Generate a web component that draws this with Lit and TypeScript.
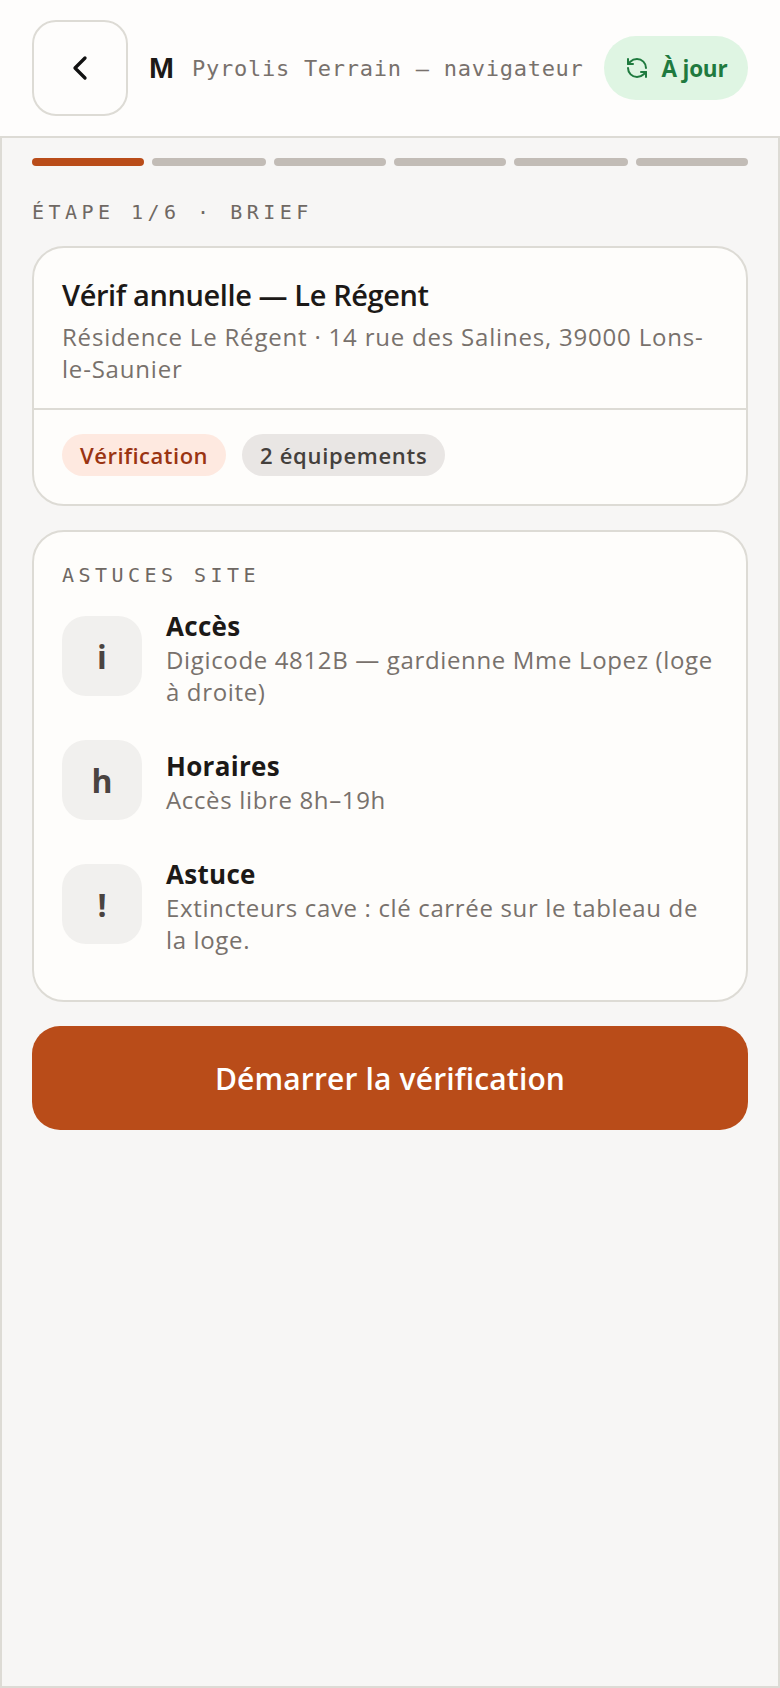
import { LitElement, html, css } from "lit";
import { customElement } from "lit/decorators.js";

const SANS = css`"Open Sans", "Noto Sans", sans-serif`;
const MONO = css`"DejaVu Sans Mono", "Liberation Mono", monospace`;

const TIPS = [
  { glyph: "i", title: "Accès", text: "Digicode 4812B — gardienne Mme Lopez (loge à droite)" },
  { glyph: "h", title: "Horaires", text: "Accès libre 8h–19h" },
  { glyph: "!", title: "Astuce", text: "Extincteurs cave : clé carrée sur le tableau de la loge." },
];

@customElement("app-root")
export class AppRoot extends LitElement {
  static styles = css`
    :host {
      display: flex;
      flex-direction: column;
      min-height: 100vh;
      background: #fefdfc;
      color: #1c1917;
      font-family: ${SANS};
    }
    .top {
      display: flex;
      align-items: center;
      gap: 20px;
      height: 136px;
      padding: 0 32px;
      box-sizing: border-box;
    }
    .back {
      flex: none;
      width: 96px;
      height: 96px;
      box-sizing: border-box;
      border: 2px solid #dddbd5;
      border-radius: 24px;
      background: #fefdfc;
      display: flex;
      align-items: center;
      justify-content: center;
      padding: 0;
    }
    .mark {
      margin-left: 1px;
      font-family: "Liberation Sans", sans-serif;
      font-size: 30px;
      font-weight: 700;
      line-height: 40px;
    }
    .app-name {
      margin-left: -2px;
      font-family: ${MONO};
      font-size: 22px;
      letter-spacing: 0.74px;
      color: #78716c;
      white-space: nowrap;
    }
    .sync {
      margin-left: auto;
      height: 64px;
      width: 144px;
      box-sizing: border-box;
      border-radius: 32px;
      background: #dff5e3;
      color: #1f7a3f;
      display: flex;
      align-items: center;
      justify-content: center;
      gap: 13px;
      font-size: 22.5px;
      font-weight: 700;
      letter-spacing: -0.2px;
    }
    main {
      flex: 1;
      display: flex;
      flex-direction: column;
      padding: 20px 30px 30px;
      border: 2px solid #dddbd5;
      background: #f7f6f5;
    }
    .steps {
      display: grid;
      grid-template-columns: 112px 114px 112px 112px 114px 112px;
      gap: 8px;
      margin-bottom: 33px;
    }
    .steps span {
      height: 8px;
      border-radius: 4px;
      background: #c2bcb6;
    }
    .steps span.on {
      background: #b94c19;
    }
    .eyebrow {
      font-family: ${MONO};
      font-size: 20px;
      line-height: 26px;
      letter-spacing: 4.47px;
      color: #6f6863;
    }
    .steps + .eyebrow {
      margin-bottom: 21px;
    }
    .card {
      border: 2px solid #dddbd5;
      border-radius: 32px;
      background: #fefdfb;
      margin-bottom: 24px;
    }
    .brief {
      padding: 28px 28px 23px;
      border-bottom: 2px solid #dddbd5;
    }
    h1 {
      margin: 0;
      font-size: 29px;
      line-height: 38px;
      font-weight: 600;
      letter-spacing: -0.4px;
    }
    .addr {
      margin: 7px 0 0;
      font-size: 24px;
      line-height: 32px;
      letter-spacing: 0.8px;
      color: #78716c;
    }
    .tags {
      display: flex;
      gap: 16px;
      padding: 24px 28px 28px;
    }
    .tag {
      height: 42px;
      padding: 0 18px;
      border-radius: 21px;
      display: flex;
      align-items: center;
      font-size: 22px;
      font-weight: 600;
      letter-spacing: 0.5px;
    }
    .tag.kind {
      background: #fee9e0;
      color: #9a3412;
    }
    .tag.count {
      background: #e9e6e4;
      color: #44403c;
      letter-spacing: 0.7px;
    }
    .tips {
      padding: 30px 28px 48px;
      display: flex;
      flex-direction: column;
      gap: 36px;
    }
    .tips .eyebrow {
      margin-bottom: -16px;
    }
    .tip {
      display: flex;
      align-items: center;
      gap: 24px;
    }
    .glyph {
      flex: none;
      width: 80px;
      height: 80px;
      border-radius: 24px;
      background: #f1f0ee;
      color: #4a4340;
      display: flex;
      align-items: center;
      justify-content: center;
      font-size: 32px;
      font-weight: 700;
    }
    .tip-body {
      margin-bottom: -4px;
    }
    .tip h2 {
      margin: 0;
      font-size: 26px;
      line-height: 36px;
      font-weight: 700;
      letter-spacing: 0.3px;
    }
    .tip p {
      margin: 0;
      font-size: 24px;
      line-height: 32px;
      letter-spacing: 0.65px;
      color: #78716c;
    }
    .start {
      height: 104px;
      border: none;
      border-radius: 28px;
      background: #b94c19;
      color: #fff;
      font-family: inherit;
      font-size: 30px;
      font-weight: 600;
      letter-spacing: 0.15px;
    }
  `;

  render() {
    return html`
      <header class="top">
        <button class="back" aria-label="Retour">
          <svg width="40" height="40" viewBox="0 0 24 24" fill="none" stroke="#111" stroke-width="2" stroke-linecap="round" stroke-linejoin="round">
            <path d="m15 18-6-6 6-6" />
          </svg>
        </button>
        <span class="mark">M</span>
        <span class="app-name">Pyrolis Terrain — navigateur</span>
        <div class="sync">
          <svg width="24" height="24" viewBox="0 0 24 24" fill="none" stroke="currentColor" stroke-width="2" stroke-linecap="round" stroke-linejoin="round">
            <path d="M21 12a9 9 0 0 0-9-9 9.75 9.75 0 0 0-6.74 2.74L3 8" />
            <path d="M3 3v5h5" />
            <path d="M3 12a9 9 0 0 0 9 9 9.75 9.75 0 0 0 6.74-2.74L21 16" />
            <path d="M16 16h5v5" />
          </svg>
          <span>À jour</span>
        </div>
      </header>
      <main>
        <div class="steps">
          ${[0, 1, 2, 3, 4, 5].map((i) => html`<span class=${i === 0 ? "on" : ""}></span>`)}
        </div>
        <div class="eyebrow">ÉTAPE 1/6 · BRIEF</div>
        <section class="card">
          <div class="brief">
            <h1>Vérif annuelle — Le Régent</h1>
            <p class="addr">Résidence Le Régent · 14 rue des Salines, 39000 Lons-le-Saunier</p>
          </div>
          <div class="tags">
            <span class="tag kind">Vérification</span>
            <span class="tag count">2 équipements</span>
          </div>
        </section>
        <section class="card tips">
          <div class="eyebrow">ASTUCES SITE</div>
          ${TIPS.map(
            (t) => html`
              <div class="tip">
                <div class="glyph">${t.glyph}</div>
                <div class="tip-body">
                  <h2>${t.title}</h2>
                  <p>${t.text}</p>
                </div>
              </div>
            `
          )}
        </section>
        <button class="start">Démarrer la vérification</button>
      </main>
    `;
  }
}
